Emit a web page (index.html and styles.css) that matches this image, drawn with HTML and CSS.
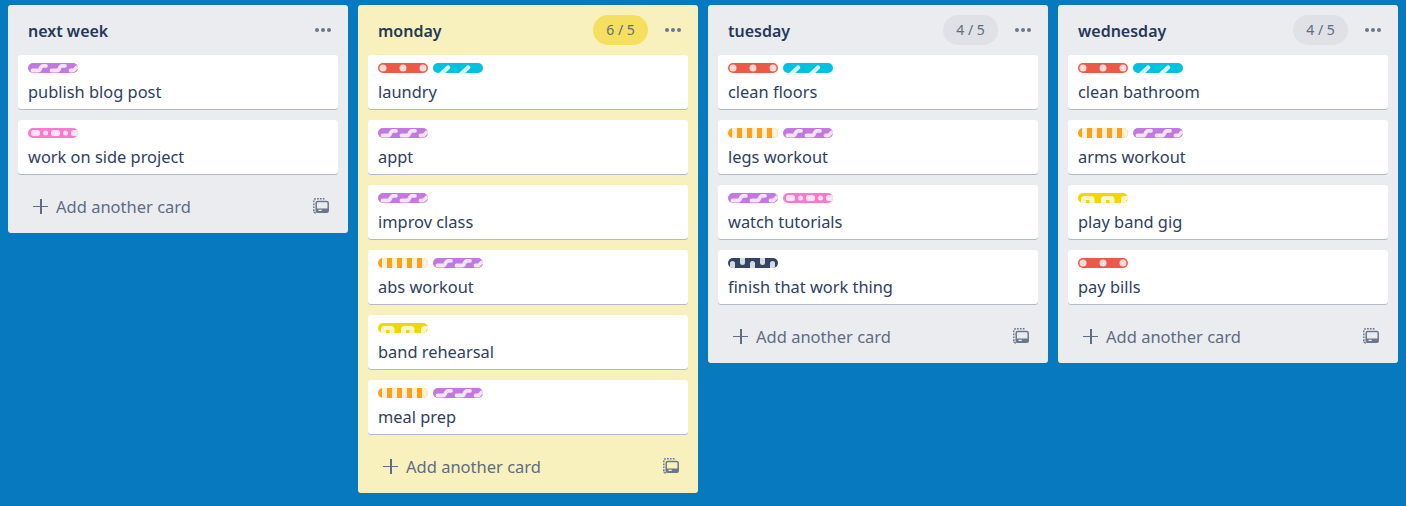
FILE: index.html
```html
<!DOCTYPE html>
<html lang="en">
  <head>
    <meta charset="UTF-8" />
    <meta name="viewport" content="width=device-width, initial-scale=1.0" />
    <title>Weekly board</title>
    <link rel="stylesheet" href="styles.css">
  </head>

  <body>
    <!-- label patterns, reused by every card -->
    <svg class="defs" width="0" height="0" aria-hidden="true">
      <symbol id="l-red" viewBox="0 0 50 10">
        <rect width="50" height="10" fill="#eb5a46" />
        <g fill="#fbd9d4"><circle cx="5" cy="5" r="3.5" /><circle cx="25" cy="5" r="3.5" /><circle cx="45" cy="5" r="3.5" /></g>
      </symbol>
      <symbol id="l-blue" viewBox="0 0 50 10">
        <rect width="50" height="10" fill="#00c2e0" />
        <path d="M8 11 L15 4.5 M28 11 L35 4.5" stroke="#d6f5fa" stroke-width="4.4" stroke-linecap="round" />
      </symbol>
      <symbol id="l-purple" viewBox="0 0 50 10">
        <rect width="50" height="10" fill="#c377e0" />
        <path d="M4.500 7.500 H10 C13 7.500 12 2.800 15 2.800 H18 M23.500 7.500 H29 C32 7.500 31 2.800 34 2.800 H37 M42.500 7.500 H45 C47 7.500 47 4 50 4" fill="none" stroke="#f3e4f9" stroke-width="3.800" stroke-linecap="round" />
      </symbol>
      <symbol id="l-orange" viewBox="0 0 50 10">
        <rect width="50" height="10" fill="#ff9f1a" />
        <path d="M4 0h5v10H4z M14 0h5v10h-5z M24 0h5v10h-5z M34 0h5v10h-5z M44 0h6v10h-6z" fill="#fff0d9" />
      </symbol>
      <symbol id="l-yellow" viewBox="0 0 50 10">
        <rect width="50" height="10" fill="#f2d600" />
        <path fill-rule="evenodd" d="M3 10 V6.500 Q3 3 6.500 3 H13 Q16.500 3 16.500 6.500 V10z M8 10 H11.500 V7 H8z M23 10 V6.500 Q23 3 26.500 3 H33 Q36.500 3 36.500 6.500 V10z M28 10 H31.500 V7 H28z M43 10 V6.500 Q43 3 46.500 3 H50 V10z M48 10 H50 V7 H48z" fill="#fdf6c8" />
      </symbol>
      <symbol id="l-navy" viewBox="0 0 50 10">
        <rect width="50" height="10" fill="#344563" />
        <path d="M2 10 V5.500 a2.500 2.500 0 0 1 5 0 V10z M12 0 V4.500 a2.500 2.500 0 0 0 5 0 V0z M22 10 V5.500 a2.500 2.500 0 0 1 5 0 V10z M32 0 V4.500 a2.500 2.500 0 0 0 5 0 V0z M42 10 V5.500 a2.500 2.500 0 0 1 5 0 V10z" fill="#d6dae0" />
      </symbol>
      <symbol id="l-pink" viewBox="0 0 50 10">
        <rect width="50" height="10" fill="#ff78cb" />
        <g fill="#ffe4f5">
          <rect x="3" y="2" width="9" height="6" rx="2.500" /><circle cx="17.500" cy="5" r="2.500" />
          <rect x="23" y="2" width="9" height="6" rx="2.500" /><circle cx="37.500" cy="5" r="2.500" />
          <rect x="43" y="2" width="10" height="6" rx="2.500" />
        </g>
      </symbol>
      <symbol id="i-template" viewBox="0 0 16 16">
        <path d="M.8 13V3Q.8.8 3 .8H12" fill="none" stroke="#6b778c" stroke-width="1.500" stroke-dasharray="1.700 1.200" />
        <path d="M.8 13.500Q1 15 3 15" fill="none" stroke="#6b778c" stroke-width="1.500" />
        <rect x="3.200" y="3.500" width="12" height="10.800" rx="1.600" class="template-face" stroke="#6b778c" stroke-width="1.500" />
        <rect x="3.200" y="10.500" width="12" height="3.800" fill="#6b778c" />
        <rect x="5.500" y="11.700" width="3.200" height="1.300" class="template-slot" />
      </symbol>
    </svg>

    <main class="board">
      <section class="list">
        <header class="list-head">
          <h2>next week</h2>
          <span class="dots"><i></i><i></i><i></i></span>
        </header>
        <article class="card">
          <div class="labels"><svg class="label"><use href="#l-purple" /></svg></div>
          <p>publish blog post</p>
        </article>
        <article class="card">
          <div class="labels"><svg class="label"><use href="#l-pink" /></svg></div>
          <p>work on side project</p>
        </article>
        <footer class="add">
          <span class="plus"></span>
          <span class="add-text">Add another card</span>
          <svg class="template"><use href="#i-template" /></svg>
        </footer>
      </section>

      <section class="list over">
        <header class="list-head">
          <h2>monday</h2>
          <span class="count">6 / 5</span>
          <span class="dots"><i></i><i></i><i></i></span>
        </header>
        <article class="card">
          <div class="labels"><svg class="label"><use href="#l-red" /></svg><svg class="label"><use href="#l-blue" /></svg></div>
          <p>laundry</p>
        </article>
        <article class="card">
          <div class="labels"><svg class="label"><use href="#l-purple" /></svg></div>
          <p>appt</p>
        </article>
        <article class="card">
          <div class="labels"><svg class="label"><use href="#l-purple" /></svg></div>
          <p>improv class</p>
        </article>
        <article class="card">
          <div class="labels"><svg class="label"><use href="#l-orange" /></svg><svg class="label"><use href="#l-purple" /></svg></div>
          <p>abs workout</p>
        </article>
        <article class="card">
          <div class="labels"><svg class="label"><use href="#l-yellow" /></svg></div>
          <p>band rehearsal</p>
        </article>
        <article class="card">
          <div class="labels"><svg class="label"><use href="#l-orange" /></svg><svg class="label"><use href="#l-purple" /></svg></div>
          <p>meal prep</p>
        </article>
        <footer class="add">
          <span class="plus"></span>
          <span class="add-text">Add another card</span>
          <svg class="template"><use href="#i-template" /></svg>
        </footer>
      </section>

      <section class="list">
        <header class="list-head">
          <h2>tuesday</h2>
          <span class="count">4 / 5</span>
          <span class="dots"><i></i><i></i><i></i></span>
        </header>
        <article class="card">
          <div class="labels"><svg class="label"><use href="#l-red" /></svg><svg class="label"><use href="#l-blue" /></svg></div>
          <p>clean floors</p>
        </article>
        <article class="card">
          <div class="labels"><svg class="label"><use href="#l-orange" /></svg><svg class="label"><use href="#l-purple" /></svg></div>
          <p>legs workout</p>
        </article>
        <article class="card">
          <div class="labels"><svg class="label"><use href="#l-purple" /></svg><svg class="label"><use href="#l-pink" /></svg></div>
          <p>watch tutorials</p>
        </article>
        <article class="card">
          <div class="labels"><svg class="label"><use href="#l-navy" /></svg></div>
          <p>finish that work thing</p>
        </article>
        <footer class="add">
          <span class="plus"></span>
          <span class="add-text">Add another card</span>
          <svg class="template"><use href="#i-template" /></svg>
        </footer>
      </section>

      <section class="list">
        <header class="list-head">
          <h2>wednesday</h2>
          <span class="count">4 / 5</span>
          <span class="dots"><i></i><i></i><i></i></span>
        </header>
        <article class="card">
          <div class="labels"><svg class="label"><use href="#l-red" /></svg><svg class="label"><use href="#l-blue" /></svg></div>
          <p>clean bathroom</p>
        </article>
        <article class="card">
          <div class="labels"><svg class="label"><use href="#l-orange" /></svg><svg class="label"><use href="#l-purple" /></svg></div>
          <p>arms workout</p>
        </article>
        <article class="card">
          <div class="labels"><svg class="label"><use href="#l-yellow" /></svg></div>
          <p>play band gig</p>
        </article>
        <article class="card">
          <div class="labels"><svg class="label"><use href="#l-red" /></svg></div>
          <p>pay bills</p>
        </article>
        <footer class="add">
          <span class="plus"></span>
          <span class="add-text">Add another card</span>
          <svg class="template"><use href="#i-template" /></svg>
        </footer>
      </section>
    </main>
  </body>
</html>
```

FILE: styles.css
```css
body {
  margin: 0;
  height: 506px;
  overflow: hidden;
  background-color: #0779bf;
  font-family: "Noto Sans", sans-serif;
  color: #253858;
}

.defs {
  position: absolute;
}

.board {
  display: flex;
  align-items: flex-start;
  gap: 10px;
  padding: 5px 8px 0;
}

.list {
  --panel: #ebecf0;
  width: 340px;
  padding: 0 10px;
  box-sizing: border-box;
  background-color: var(--panel);
  border-radius: 3px;
}

.list.over {
  --panel: #f9f1bd;
}

.list-head {
  display: flex;
  align-items: center;
  height: 50px;
  padding: 2px 7px 0 10px;
  box-sizing: border-box;
}

.list-head h2 {
  flex: 1;
  margin: 0;
  font-size: 16px;
  font-weight: 600;
  color: #253858;
}

.count {
  width: 55px;
  height: 30px;
  margin: -2px 17px 0 0;
  border-radius: 15px;
  background-color: #dfe1e6;
  color: #5e6c84;
  font-size: 14px;
  line-height: 30px;
  text-align: center;
}

.over .count {
  background-color: #f5df5f;
}

.dots {
  display: flex;
  gap: 2px;
  margin: -3px 0 0;
}

.dots i {
  width: 4px;
  height: 4px;
  border-radius: 50%;
  background-color: #6b778c;
}

.card {
  height: 55px;
  margin-bottom: 10px;
  padding: 8px 10px 0;
  box-sizing: border-box;
  background-color: #fff;
  border-radius: 3px;
  box-shadow: inset 0 -1px 0 #b3b9c6;
}

.card p {
  margin: 0;
  padding-top: 2px;
  font-size: 16.4px;
  line-height: 24px;
  color: #2f4060;
}

.labels {
  display: flex;
  gap: 5px;
  height: 10px;
  margin-bottom: 5px;
}

.label {
  width: 50px;
  height: 10px;
  border-radius: 5px;
}

.add {
  display: flex;
  align-items: center;
  height: 48px;
  padding: 0 0 6px 15px;
  box-sizing: border-box;
  color: #5e6c84;
}

.plus {
  position: relative;
  width: 15px;
  height: 15px;
  margin-right: 8px;
}

.plus::before,
.plus::after {
  content: "";
  position: absolute;
  background-color: #5e6c84;
}

.plus::before {
  left: 0;
  top: 7px;
  width: 15px;
  height: 1.5px;
}

.plus::after {
  left: 7px;
  top: 0;
  width: 1.5px;
  height: 15px;
}

.add-text {
  flex: 1;
  font-size: 16.5px;
}

.template {
  width: 16px;
  height: 16px;
  margin-right: 9px;
}

.template-face,
.template-slot {
  fill: var(--panel);
}
```
